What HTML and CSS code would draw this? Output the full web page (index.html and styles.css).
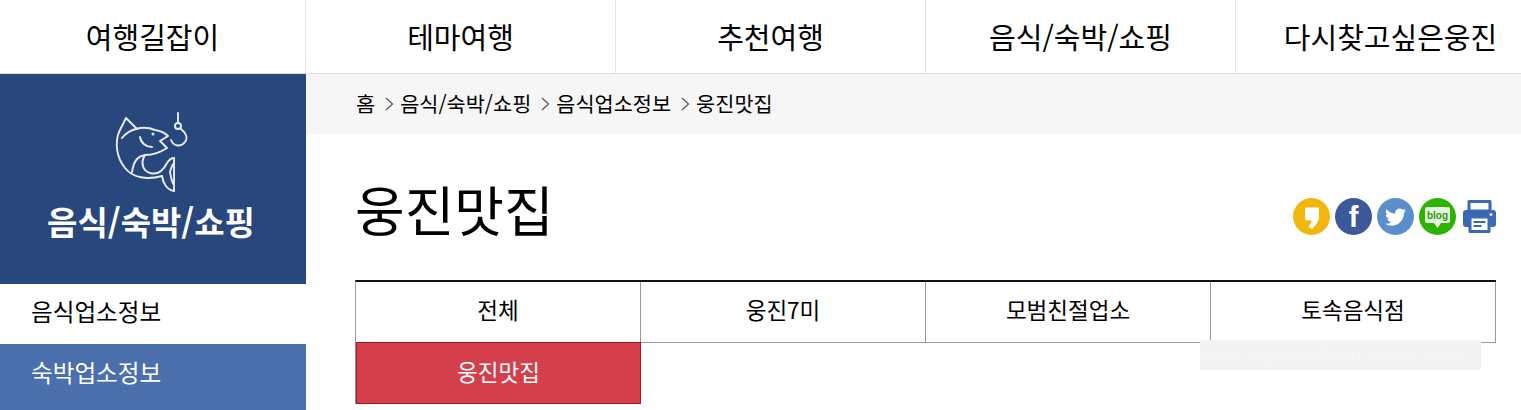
FILE: index.html
```html
<!DOCTYPE html>
<html lang="ko">
<head>
    <meta charset="UTF-8">
    <meta name="viewport" content="width=device-width, initial-scale=1.0">
    <title>웅진맛집</title>
    <link rel="stylesheet" href="styles.css">
</head>
<body>

    <!-- 상단 메뉴 -->
    <nav class="gnb">
        <a class="gnb-item gnb-first">여행길잡이</a>
        <a class="gnb-item">테마여행</a>
        <a class="gnb-item">추천여행</a>
        <a class="gnb-item">음식/숙박/쇼핑</a>
        <a class="gnb-item">다시찾고싶은웅진</a>
    </nav>

    <div class="wrap">
        <!-- 왼쪽 메뉴 -->
        <aside class="side">
            <div class="side-head">
                <svg class="fish" viewBox="0 0 90 90" fill="none" stroke="#e9edf4" stroke-width="1.9" stroke-linecap="round" stroke-linejoin="round">
                    <path d="M14 27 L21 13 L32 24"/>
                    <path d="M14 27 C10 37 11 52 20 63 C28 73 42 75 57 71"/>
                    <path d="M17 33 C24 24 38 20 50 25 C56 26 60 28 63 31 L55 36 L62 43 C56 47 49 50 40 50 C34 51 29 54 27 67"/>
                    <path d="M35 32 C36 38 41 42 47 42"/>
                    <circle cx="48" cy="29" r="0.6"/>
                    <path d="M40 50 C35 58 38 66 45 68 C52 70 58 66 62 58 C64 55 67 53 69 53"/>
                    <path d="M57 71 C58 78 62 85 69 86"/>
                    <path d="M69 53 V86 M69 58 C66 61 66 64 65 67 C66 71 66 76 69 80"/>
                    <path d="M73 8 V17"/>
                    <circle cx="73" cy="21" r="3"/>
                    <path d="M76 24 C81 28 83 33 80 37 C76 42 69 42 66 35"/>
                </svg>
                <h2 class="side-title">음식/숙박/쇼핑</h2>
            </div>
            <a class="side-link">음식업소정보</a>
            <a class="side-link side-on">숙박업소정보</a>
        </aside>

        <main class="main">
            <div class="crumb">
                <span>홈</span>
                <svg class="arrow" viewBox="0 0 10 14" fill="none" stroke="#555" stroke-width="1.2"><path d="M2 1 L8.5 7 L2 13"/></svg>
                <span>음식/숙박/쇼핑</span>
                <svg class="arrow" viewBox="0 0 10 14" fill="none" stroke="#555" stroke-width="1.2"><path d="M2 1 L8.5 7 L2 13"/></svg>
                <span>음식업소정보</span>
                <svg class="arrow" viewBox="0 0 10 14" fill="none" stroke="#555" stroke-width="1.2"><path d="M2 1 L8.5 7 L2 13"/></svg>
                <span>웅진맛집</span>
            </div>

            <div class="content">
                <div class="title-row">
                    <h1 class="page-title">웅진맛집</h1>
                    <div class="share">
                        <!-- 카카오스토리 -->
                        <svg class="share-icon" viewBox="0 0 37 37">
                            <circle cx="18.5" cy="18.5" r="18.5" fill="#f2b70f"/>
                            <path d="M14 9.5 H26 V19 C26 23.5 22 28 19 31 L15.5 29 C17 27 18 25 18.5 22.5 H14 A2 2 0 0 1 12 20.5 V11.5 A2 2 0 0 1 14 9.5 Z" fill="#fff"/>
                        </svg>
                        <!-- 페이스북 -->
                        <svg class="share-icon" viewBox="0 0 37 37">
                            <circle cx="18.5" cy="18.5" r="18.5" fill="#3b5998"/>
                            <text x="18.5" y="29" text-anchor="middle" class="fb-text">f</text>
                        </svg>
                        <!-- 트위터 -->
                        <svg class="share-icon" viewBox="0 0 37 37">
                            <circle cx="18.5" cy="18.5" r="18.5" fill="#5a8fcb"/>
                            <path transform="translate(8 8.5) scale(0.88)" d="M23.95 4.57a10 10 0 0 1-2.82.77 4.96 4.96 0 0 0 2.16-2.72c-.95.55-2 .96-3.12 1.19a4.92 4.92 0 0 0-8.38 4.48C7.69 8.1 4.07 6.13 1.64 3.16a4.9 4.9 0 0 0-.67 2.47c0 1.71.87 3.21 2.19 4.1a4.9 4.9 0 0 1-2.23-.61v.06a4.92 4.92 0 0 0 3.95 4.83 5 5 0 0 1-2.21.08 4.94 4.94 0 0 0 4.6 3.42A9.87 9.87 0 0 1 0 19.54a13.94 13.94 0 0 0 7.55 2.21c9.05 0 14-7.5 14-13.98 0-.21 0-.42-.02-.63a9.94 9.94 0 0 0 2.46-2.55z" fill="#fff"/>
                        </svg>
                        <!-- 블로그 -->
                        <svg class="share-icon" viewBox="0 0 37 37">
                            <circle cx="18.5" cy="18.5" r="18.5" fill="#2db400"/>
                            <path d="M8 9 H29 A2 2 0 0 1 31 11 V23 A2 2 0 0 1 29 25 H22 L18.5 30 L15 25 H8 A2 2 0 0 1 6 23 V11 A2 2 0 0 1 8 9 Z" fill="#e8f7e2"/>
                            <text x="18.5" y="21" text-anchor="middle" class="blog-text">blog</text>
                        </svg>
                        <!-- 인쇄 -->
                        <svg class="print-icon" viewBox="0 0 33 33">
                            <path d="M6 1.5 H27 V11 H6 Z" fill="#fff" stroke="#3a68b5" stroke-width="3" stroke-linejoin="round"/>
                            <path d="M3 10 H30 A3 3 0 0 1 33 13 V24 A3 3 0 0 1 30 27 H3 A3 3 0 0 1 0 24 V13 A3 3 0 0 1 3 10 Z" fill="#3a68b5"/>
                            <rect x="7" y="17" width="19" height="14.5" fill="#fff" stroke="#3a68b5" stroke-width="3" stroke-linejoin="round"/>
                            <rect x="10.5" y="21" width="12" height="2" fill="#3a68b5"/>
                            <rect x="10.5" y="25" width="8" height="2" fill="#3a68b5"/>
                            <circle cx="28" cy="14.5" r="1.5" fill="#dfe8f5"/>
                        </svg>
                    </div>
                </div>

                <ul class="tabs">
                    <li class="tab">전체</li>
                    <li class="tab">웅진7미</li>
                    <li class="tab">모범친절업소</li>
                    <li class="tab">토속음식점</li>
                    <li class="tab tab-on">웅진맛집</li>
                </ul>
            </div>
        </main>
    </div>

    <div class="stamp">https://goverinform.tistory.com</div>

</body>
</html>
```

FILE: styles.css
```css
html, body { margin: 0; padding: 0; height: 410px; overflow: hidden; background: #fff; }
body { font-family: "Noto Sans CJK KR", "Noto Sans", sans-serif; color: #000; position: relative; }
a { color: inherit; text-decoration: none; }

/* 상단 메뉴 */
.gnb { display: flex; height: 73px; border-bottom: 1px solid #dedede; overflow: hidden; }
.gnb-item { flex: 0 0 309px; padding-bottom: 2px; box-sizing: content-box; border-right: 1px solid #e4e4e4; display: flex; align-items: center; justify-content: center; font-size: 29px; white-space: nowrap; }
.gnb-first { flex-basis: 305px; }

.wrap { display: flex; }

/* 왼쪽 메뉴 */
.side { flex: 0 0 306px; }
.side-head { height: 210px; background: #28477c; color: #fff; display: flex; flex-direction: column; align-items: center; box-sizing: border-box; padding-top: 31px; }
.fish { width: 90px; height: 90px; margin-right: 6px; display: block; }
.side-title { margin: 4px 4px 0 0; font-size: 33px; line-height: 44px; font-weight: 700; }
.side-link { display: flex; align-items: center; height: 60px; padding: 0 0 4px 31px; box-sizing: border-box; font-size: 23.6px; line-height: 1; }
.side-on { height: 66px; padding-bottom: 9px; background: #4c6fad; color: #fff; }

.main { flex: 1; min-width: 0; }

/* 경로 */
.crumb { height: 60px; padding-bottom: 1px; box-sizing: border-box; background: #f6f6f6; display: flex; align-items: center; padding-left: 50px; font-size: 20.8px; line-height: 1; }
.arrow { width: 10px; height: 14px; margin: 0 6px 0 9px; }

.content { padding: 0 25px 0 49px; }

.title-row { display: flex; justify-content: space-between; align-items: center; height: 146px; padding-top: 4px; box-sizing: border-box; }
.page-title { margin: 0; font-size: 54px; line-height: 1; font-weight: 400; }

.share { display: flex; align-items: center; gap: 5px; margin-top: 15px; }
.share-icon { width: 37px; height: 37px; display: block; }
.print-icon { width: 33px; height: 33px; display: block; margin-left: 2px; }
.fb-text { font-family: "Liberation Sans", sans-serif; font-weight: 700; font-size: 29px; fill: #fff; }
.blog-text { font-family: "Liberation Sans", sans-serif; font-weight: 700; font-size: 10px; fill: #2a9a0a; }

/* 탭 */
.tabs { list-style: none; margin: 0; padding: 0; display: grid; grid-template-columns: repeat(4, 285px); grid-auto-rows: 61px; border-top: 2px solid #111; border-left: 1px solid #999; width: 1140px; }
.tab { box-sizing: border-box; padding-bottom: 6px; border-right: 1px solid #999; border-bottom: 1px solid #999; display: flex; align-items: center; justify-content: center; font-size: 22.5px; line-height: 1; }
.tab-on { background: #d53f4c; color: #fff; border: 1px solid #a5141f; padding-bottom: 3px; margin-top: -1px; height: 62px; }

/* 워터마크 */
.stamp { position: absolute; left: 1200px; top: 340px; width: 281px; height: 30px; background: #f3f3f3; color: #f5f5f5; font-family: "Liberation Sans", sans-serif; font-size: 19.5px; line-height: 30px; white-space: nowrap; }
```
